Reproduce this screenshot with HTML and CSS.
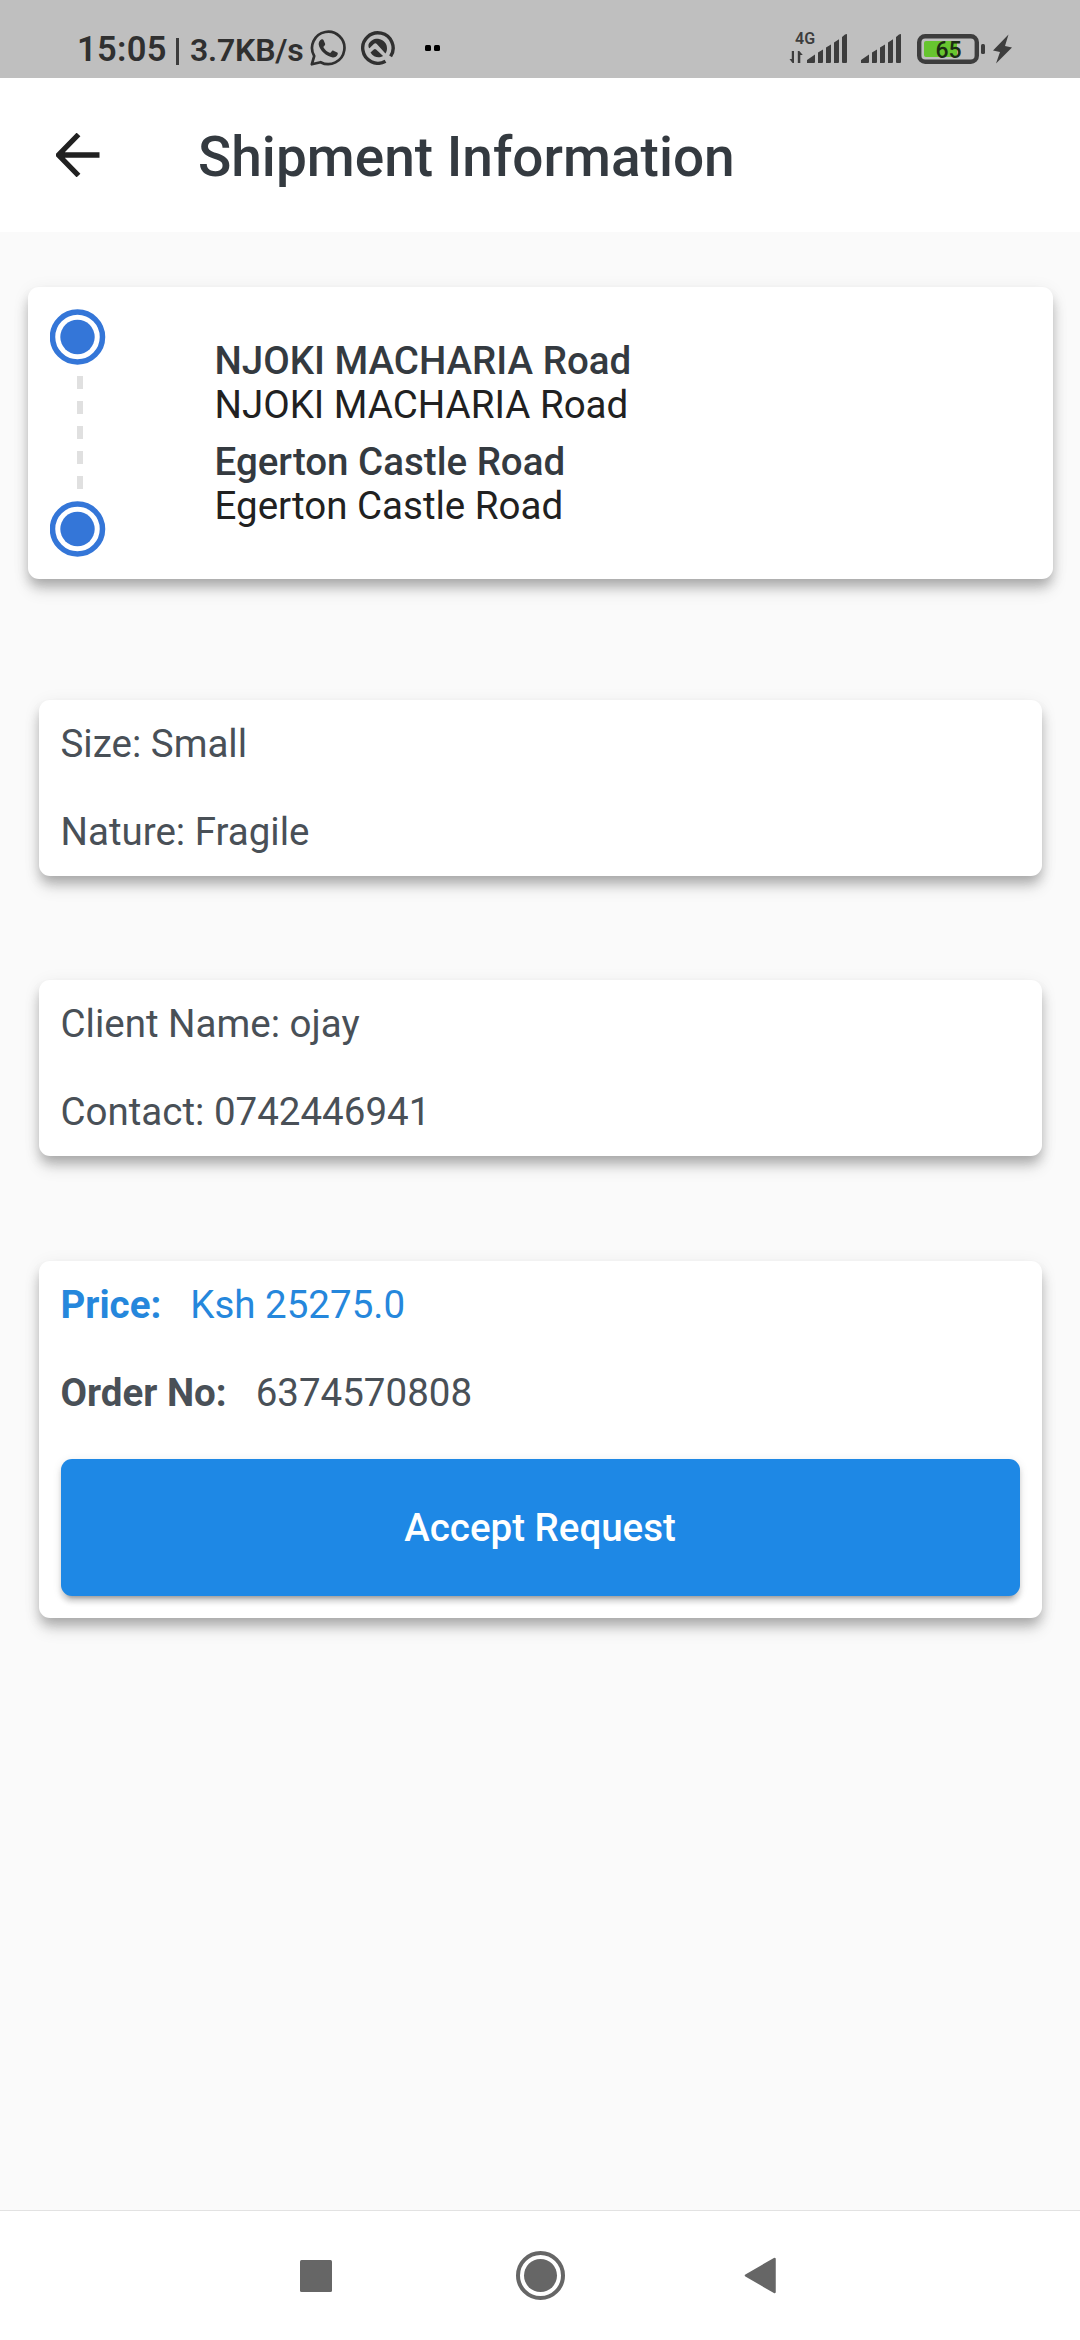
FILE: index.html
```html
<!DOCTYPE html>
<html lang="en">
<head>
<meta charset="utf-8">
<title>Shipment Information</title>
<link rel="stylesheet" href="styles.css">
</head>
<body>
<div class="screen">
  <div class="status">
    <span class="clock">15:05</span>
    <span class="divider"></span>
    <span class="speed">3.7KB/s</span>
    <svg class="whatsapp" width="36" height="36" viewBox="0 0 36 36">
      <path d="M1.8 34.3 4.2 26A16.2 16.2 0 1 1 10.6 32.2Z" fill="none" stroke="#303030" stroke-width="2.7" stroke-linejoin="round"/>
      <path d="M11.3 9.6c.7-.5 1.8-.4 2.2.5l1.6 3.7c.2.6 0 1.100-.3 1.500l-1.500 1.700c1.600 2.900 3.800 4.800 6.900 6l1.800-2c.4-.5.9-.6 1.500-.3l3.700 1.800c.7.4.7 1 .4 1.900-.7 2-2.800 3.100-4.800 3-6.500-.6-13.200-7-14.100-12.800-.3-2.200 1-4.100 2.600-5z" fill="#303030"/>
    </svg>
    <svg class="appicon" width="34" height="34" viewBox="0 0 34 34">
      <path d="M24.500 30.200A15.200 15.200 0 1 1 29.600 25.400" fill="none" stroke="#303030" stroke-width="3.400"/>
      <path d="M7.500 13.500C9.500 9 14 7.300 18 8c5 .8 8.300 5 8 9.700-.1 1.800-.6 3.300-1.600 4.800L15.800 13c-1-1-2-1-3 0l-4.300 4.200c-.9.100-1.200-2-1-3.700z" fill="#303030"/>
      <path d="M9.500 21.500l3.300-3.100c.8-.7 1.500-.7 2.300 0l7 6.500c-3.600 2.300-9.200 2-12.600-3.400z" fill="#303030"/>
    </svg>
    <svg class="dots" width="15" height="6" viewBox="0 0 15 6"><rect width="6" height="6" rx="1.500"/><rect x="9" width="6" height="6" rx="1.500"/></svg>
    <svg class="system" width="226" height="36" viewBox="788 30 226 36" fill="#3d3d3d">
      <text x="794" y="44" class="network">4G</text>
      <path d="M793 51v12h-1.500l-3-4h2.300v-8zM796.800 63V51h1.500l3.500 4h-2.500v8z"/>
      <path id="bars" d="M806 63v-3l8-5.500V62q0 1-1 1zM817 63V52.500l5-3V62q0 1-1 1zM825 63V47.500l5-3V62q0 1-1 1zM833 63V42.500l5-3.200V62q0 1-1 1zM841 62V37l3-2.600q2-1 2 0V62q0 1-1 1h-3q-1 0-1-1z"/>
      <use href="#bars" x="54"/>
      <rect x="923" y="41" width="33" height="16" rx="2" fill="#67c52f"/>
      <rect x="918.200" y="36.200" width="57.600" height="25.600" rx="6" fill="none" stroke="#3d3d3d" stroke-width="4.400"/>
      <rect x="980" y="44" width="4" height="10" rx="1.500"/>
      <text x="934.500" y="57.500" class="percent">65</text>
      <path d="M1007.500 34.500 992 50.500l7 1.500-4 11.500L1011 47.500l-7-1.500z"/>
    </svg>
  </div>

  <header class="appbar">
    <svg class="back" width="44" height="44" viewBox="0 0 44 44"><path d="M43.500 22H3M22.500 1.500 2.500 22l20 20.500" fill="none" stroke="#212121" stroke-width="5.300"/></svg>
    <h1 class="title">Shipment Information</h1>
  </header>

  <main class="content">
    <section class="card route">
      <div class="track">
        <svg class="stop" width="56" height="56" viewBox="0 0 56 56"><circle cx="27.500" cy="28" r="25" fill="none" stroke="#3476d8" stroke-width="5.500"/><circle cx="27.500" cy="28" r="17.200" fill="#3476d8"/></svg>
        <div class="dashes"><i></i><i></i><i></i><i></i><i></i></div>
        <svg class="stop" width="56" height="56" viewBox="0 0 56 56"><circle cx="27.500" cy="28" r="25" fill="none" stroke="#3476d8" stroke-width="5.500"/><circle cx="27.500" cy="28" r="17.200" fill="#3476d8"/></svg>
      </div>
      <div class="places">
        <div class="place"><strong class="place-name">NJOKI MACHARIA Road</strong><span>NJOKI MACHARIA Road</span></div>
        <div class="place"><strong class="place-name">Egerton Castle Road</strong><span>Egerton Castle Road</span></div>
      </div>
    </section>

    <section class="card info">
      <p class="row">Size: Small</p>
      <p class="row">Nature: Fragile</p>
    </section>

    <section class="card info">
      <p class="row">Client Name: ojay</p>
      <p class="row">Contact: 0742446941</p>
    </section>

    <section class="card info">
      <p class="row price"><b>Price:</b><span>Ksh 25275.0</span></p>
      <p class="row"><b>Order No:</b><span>6374570808</span></p>
      <button class="accept">Accept Request</button>
    </section>
  </main>

  <nav class="navbar">
    <svg width="32" height="32" viewBox="0 0 32 32"><rect width="32" height="32" rx="1.500" fill="#666"/></svg>
    <svg class="home" width="49" height="49" viewBox="0 0 49 49"><circle cx="24.500" cy="24.500" r="22.500" fill="none" stroke="#666" stroke-width="4"/><circle cx="24.500" cy="24.500" r="16.500" fill="#666"/></svg>
    <svg width="32" height="37" viewBox="0 0 32 37"><path d="M2 18.500 30.500 2v33z" fill="#666" stroke="#666" stroke-width="2.500" stroke-linejoin="round"/></svg>
  </nav>
</div>
</body>
</html>
```
FILE: styles.css
```css
* { box-sizing: border-box; }

body {
  margin: 0;
  background: #fafafa;
  color: #212121;
  font-family: Roboto, "Noto Sans", sans-serif;
  font-size: 38.5px;
  line-height: 44px;
}

.screen {
  width: 1080px;
  height: 2340px;
  display: flex;
  flex-direction: column;
  overflow: hidden;
}

svg { display: block; flex: none; }

/* Status bar */
.status {
  height: 78px;
  flex: none;
  display: flex;
  align-items: center;
  padding: 18px 65px 0 77px;
  background: #bfbfbf;
  color: #303030;
  line-height: 40px;
  font-weight: 600;
}
.clock { width: 99px; font-size: 34.5px; letter-spacing: 0.3px; padding-top: 2px; }
.divider { width: 3px; height: 27px; margin-top: 6px; background: #3c3c3c; }
.speed { width: 131px; padding: 3px 0 0 11px; font-size: 32px; letter-spacing: -0.2px; white-space: nowrap; }
.appicon { margin-left: 15px; }
.dots { margin-left: 30px; }
.system { margin-left: auto; }
.network { font-size: 16px; font-weight: 600; }
.percent { font-size: 23px; font-weight: 500; fill: #1c2b14; }

/* App bar */
.appbar {
  height: 154px;
  flex: none;
  display: flex;
  align-items: center;
  gap: 98px;
  padding-left: 56px;
  background: #fff;
}
.title {
  margin: 4px 0 0;
  color: #343a40;
  font-size: 55px;
  font-weight: 500;
  line-height: 64px;
}

/* Cards */
.content {
  flex: 1;
  display: flex;
  flex-direction: column;
  gap: 104.6px;
  padding: 55px 38.5px 0;
}
.card {
  border-radius: 11px;
  background: #fff;
  box-shadow:
    0 8px 12px -2px rgba(0, 0, 0, .22),
    0 12px 16px rgba(0, 0, 0, .11),
    0 3px 18px rgba(0, 0, 0, .07);
}

.route {
  height: 291.5px;
  margin: 0 -11px 16.5px;
  padding: 22px;
  display: flex;
  gap: 109px;
}
.track {
  width: 56px;
  display: flex;
  flex-direction: column;
  justify-content: space-between;
}
.dashes {
  display: flex;
  flex-direction: column;
  gap: 12px;
  padding-left: 27.500px;
}
.dashes i { width: 6px; height: 13px; background: #e0e0e0; }
.places {
  display: flex;
  flex-direction: column;
  gap: 13.5px;
  padding-top: 29.5px;
}
.place { display: flex; flex-direction: column; }
.place-name { color: #343a40; font-weight: 500; }

.info { color: #495057; padding: 0 22px; }
.row {
  height: 88px;
  margin: 0;
  padding-top: 0.5px;
  display: flex;
  align-items: center;
  gap: 29px;
}
.row b { font-weight: 700; }
.price { color: #2587dc; }
.accept {
  display: block;
  width: 100%;
  height: 137.5px;
  margin: 22px 0;
  padding: 1px 0 0;
  border: 0;
  border-radius: 11px;
  background: #1e88e5;
  color: #fff;
  font: 500 38.5px/44px Roboto, "Noto Sans", sans-serif;
  box-shadow:
    0 8px 3px -6px rgba(0, 0, 0, .2),
    0 5.5px 5.5px rgba(0, 0, 0, .14),
    0 2.75px 10px rgba(0, 0, 0, .1);
}

/* System navigation */
.navbar {
  height: 130px;
  flex: none;
  display: flex;
  align-items: center;
  justify-content: space-between;
  padding: 0 304px 0 300px;
  border-top: 1px solid #e2e2e2;
  background: #fff;
}
.home { margin-left: 4px; }
```
